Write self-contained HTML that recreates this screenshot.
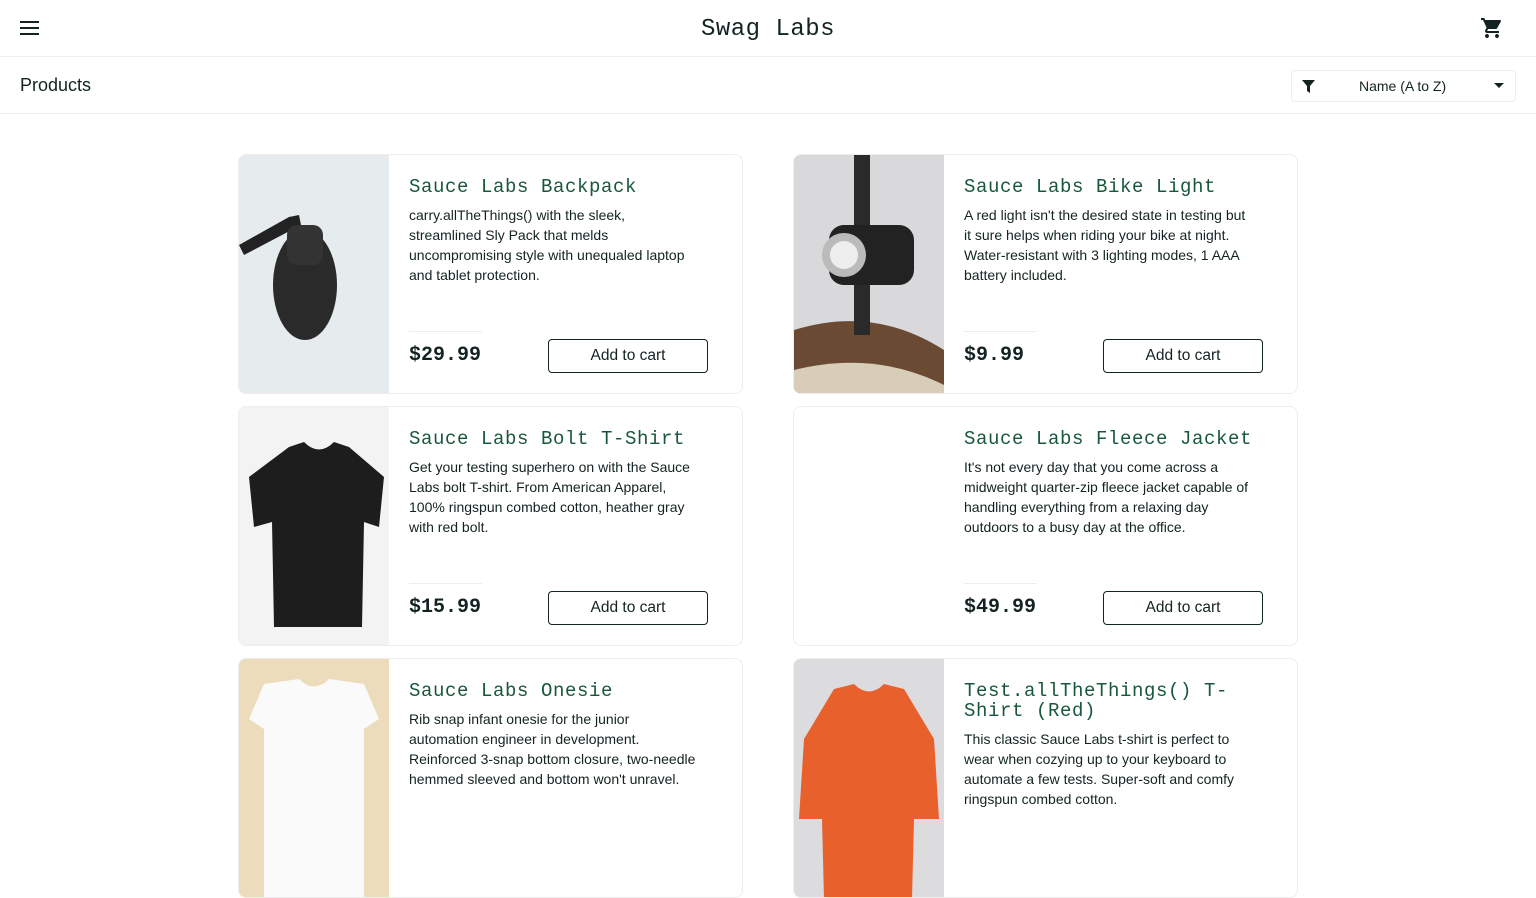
<!DOCTYPE html>
<html><head><meta charset="utf-8"><style>
*{box-sizing:border-box;margin:0;padding:0}
html,body{width:1536px;height:800px;overflow:hidden}
body{background:#fff;font-family:"Liberation Sans",sans-serif;color:#132322}
.hdr{height:57px;border-bottom:1px solid #ededed;position:relative}
.logo{position:absolute;left:0;right:0;top:16px;text-align:center;font-family:"Liberation Mono",monospace;font-size:24px;letter-spacing:0.5px;color:#132322}
.sub{height:57px;border-bottom:1px solid #ededed;position:relative}
.sub .t{position:absolute;left:20px;top:18px;font-size:18px}
.sel{position:absolute;left:1291px;top:13px;width:225px;height:32px;border:1px solid #ededed;border-radius:4px;font-size:14px}
.card{position:absolute;width:505px;height:240px;border:1px solid #ededed;border-radius:8px;overflow:hidden}
.img{position:absolute;left:0;top:0;width:150px;height:100%;overflow:hidden}
.body{position:absolute;left:170px;top:22px;width:300px}
.tt{font-family:"Liberation Mono",monospace;font-size:19px;letter-spacing:0.6px;color:#18583a;line-height:20px}
.d{font-size:14px;line-height:20px;margin-top:8px;color:#132322;width:292px}
.line{position:absolute;left:170px;top:176px;width:73px;border-top:1px solid #ededed}
.pr{position:absolute;left:170px;top:189px;font-family:"Liberation Mono",monospace;font-size:20px;font-weight:bold;letter-spacing:0}
.btn{position:absolute;left:309px;top:184px;width:160px;height:34px;border:1px solid #132322;border-radius:4px;text-align:center;line-height:32px;font-size:15.5px}
</style></head><body>
<div class="hdr">
<svg style="position:absolute;left:20px;top:20px" width="20" height="16"><rect y="1" width="19" height="2" fill="#132322"/><rect y="7" width="19" height="2" fill="#132322"/><rect y="13" width="19" height="2" fill="#132322"/></svg>
<div class="logo">Swag Labs</div>
<svg style="position:absolute;left:1480px;top:16px" width="24" height="24" viewBox="0 0 24 24"><path fill="#132322" d="M7 18c-1.1 0-2 .9-2 2s.9 2 2 2 2-.9 2-2-.9-2-2-2zM1 2v2h2l3.6 7.590-1.35 2.450c-.16.28-.25.61-.25.96 0 1.1.9 2 2 2h12v-2H7.42c-.14 0-.25-.11-.25-.25l.03-.12.9-1.63h7.45c.75 0 1.410-.41 1.750-1.030l3.58-6.49A1 1 0 0020 4H5.21l-.94-2H1zm16 16c-1.1 0-2 .9-2 2s.9 2 2 2 2-.9 2-2-.9-2-2-2z"/></svg>
</div>
<div class="sub"><div class="t">Products</div>
<div class="sel"><svg style="position:absolute;left:10px;top:9px" width="14" height="14"><path d="M0 0h13L8 6v7L5 11V6z" fill="#132322"/></svg>
<span style="position:absolute;left:67px;top:7px">Name (A to Z)</span>
<svg style="position:absolute;left:202px;top:12px" width="10" height="6"><path d="M0 0h10L5 5z" fill="#132322"/></svg></div></div>

<div class="card" style="left:238px;top:154px"><div class="img" style="background:#e6ebee"><svg width="150" height="240"><path d="M0 90 L50 62 L60 60 L62 70 L5 100Z" fill="#222"/><ellipse cx="66" cy="130" rx="32" ry="55" fill="#2a2a2a"/><rect x="48" y="70" width="36" height="40" rx="10" fill="#333"/></svg></div>
<div class="body"><div class="tt">Sauce Labs Backpack</div><div class="d">carry.allTheThings() with the sleek, streamlined Sly Pack that melds uncompromising style with unequaled laptop and tablet protection.</div></div>
<div class="line"></div><div class="pr">$29.99</div><div class="btn">Add to cart</div></div>

<div class="card" style="left:793px;top:154px"><div class="img" style="background:#d9d9db"><svg width="150" height="240"><path d="M0 175 Q80 150 150 195 L150 240 L0 240Z" fill="#6b4a33"/><path d="M0 215 Q80 195 150 230 L150 240 L0 240Z" fill="#d8cdb8"/><rect x="60" y="0" width="16" height="180" fill="#2a2a2a"/><rect x="35" y="70" width="85" height="60" rx="15" fill="#222"/><circle cx="50" cy="100" r="22" fill="#bbb"/><circle cx="50" cy="100" r="14" fill="#eee"/></svg></div>
<div class="body"><div class="tt">Sauce Labs Bike Light</div><div class="d">A red light isn't the desired state in testing but it sure helps when riding your bike at night. Water-resistant with 3 lighting modes, 1 AAA battery included.</div></div>
<div class="line"></div><div class="pr">$9.99</div><div class="btn">Add to cart</div></div>

<div class="card" style="left:238px;top:406px"><div class="img" style="background:#f3f3f3"><svg width="150" height="240"><path d="M50 40 L65 35 Q80 50 95 35 L110 40 L145 70 L140 120 L125 115 L123 220 L35 220 L33 115 L15 120 L10 70Z" fill="#1d1d1d"/></svg></div>
<div class="body"><div class="tt">Sauce Labs Bolt T-Shirt</div><div class="d">Get your testing superhero on with the Sauce Labs bolt T-shirt. From American Apparel, 100% ringspun combed cotton, heather gray with red bolt.</div></div>
<div class="line"></div><div class="pr">$15.99</div><div class="btn">Add to cart</div></div>

<div class="card" style="left:793px;top:406px"><div class="img" style="background:#fff"></div>
<div class="body"><div class="tt">Sauce Labs Fleece Jacket</div><div class="d">It's not every day that you come across a midweight quarter-zip fleece jacket capable of handling everything from a relaxing day outdoors to a busy day at the office.</div></div>
<div class="line"></div><div class="pr">$49.99</div><div class="btn">Add to cart</div></div>

<div class="card" style="left:238px;top:658px"><div class="img" style="background:#eddcbc"><svg width="150" height="240"><path d="M25 25 L60 20 Q75 35 90 20 L125 25 L140 60 L125 70 L125 240 L25 240 L25 70 L10 60Z" fill="#fafafa"/></svg></div>
<div class="body"><div class="tt">Sauce Labs Onesie</div><div class="d">Rib snap infant onesie for the junior automation engineer in development. Reinforced 3-snap bottom closure, two-needle hemmed sleeved and bottom won't unravel.</div></div></div>

<div class="card" style="left:793px;top:658px"><div class="img" style="background:#dcdcde"><svg width="150" height="240"><path d="M40 30 L60 25 Q75 40 90 25 L110 30 L140 80 L145 160 L120 160 L118 240 L30 240 L28 160 L5 160 L10 80Z" fill="#e8602c"/></svg></div>
<div class="body"><div class="tt">Test.allTheThings() T-Shirt (Red)</div><div class="d">This classic Sauce Labs t-shirt is perfect to wear when cozying up to your keyboard to automate a few tests. Super-soft and comfy ringspun combed cotton.</div></div></div>
</body></html>
